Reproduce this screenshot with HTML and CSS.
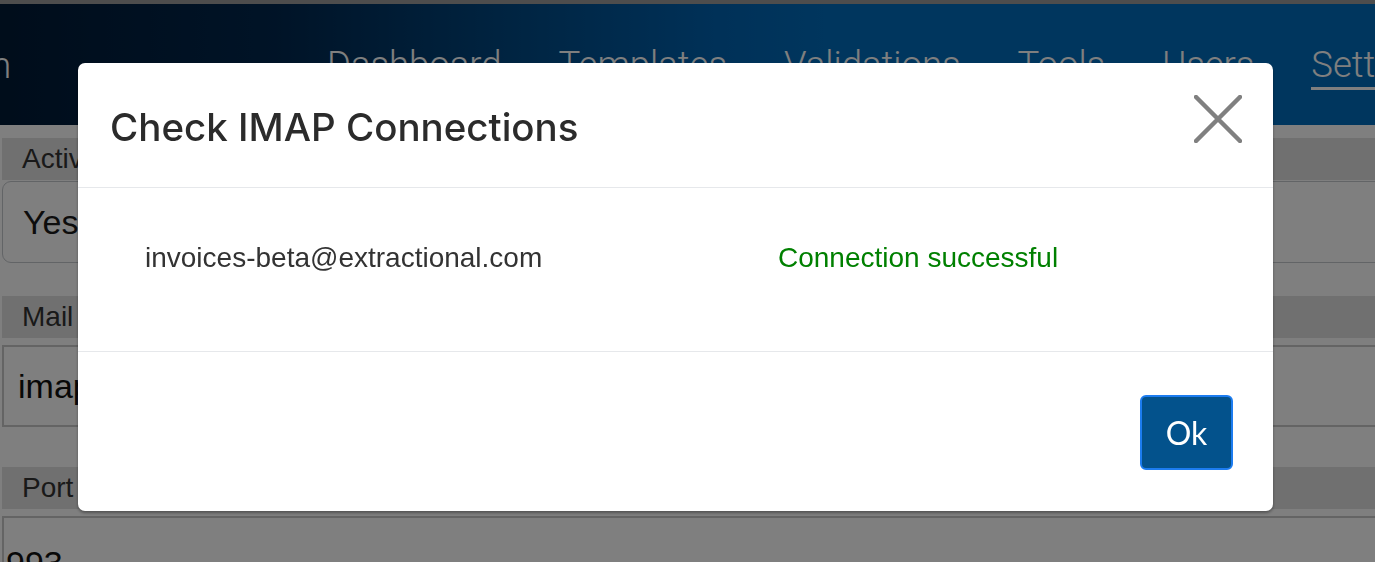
FILE: index.html
```html
<!DOCTYPE html>
<html lang="en">
<head>
<meta charset="utf-8">
<title>Settings – Check IMAP Connections</title>
<link rel="stylesheet" href="styles.css">
</head>
<body>
  <div class="topstrip"></div>
  <header class="navbar">
    <div class="brand"><span>Extractional.com</span></div>
    <nav class="nav">
      <a class="nav-link">Dashboard</a>
      <a class="nav-link">Templates</a>
      <a class="nav-link">Validations</a>
      <a class="nav-link">Tools</a>
      <a class="nav-link">Users</a>
      <a class="nav-link active">Settings</a>
    </nav>
  </header>

  <main class="form">
    <div class="field">
      <div class="label">Active</div>
      <div class="select">Yes</div>
    </div>
    <div class="field gap-mail">
      <div class="label">Mail server</div>
      <div class="input">imap.extractional.com</div>
    </div>
    <div class="field gap-port">
      <div class="label">Port</div>
      <div class="input port">993</div>
    </div>
  </main>

  <div class="backdrop"></div>

  <div class="modal" role="dialog">
    <div class="modal-header">
      <h5 class="modal-title">Check IMAP Connections</h5>
      <button class="close" aria-label="Close">
        <svg width="48" height="48" viewBox="0 0 48 48"><path d="M2 2 L46 46 M46 2 L2 46" stroke="#808080" stroke-width="4.5" stroke-linecap="round" fill="none"/></svg>
      </button>
    </div>
    <div class="modal-body">
      <div class="result-row">
        <span class="account">invoices-beta@extractional.com</span>
        <span class="status ok">Connection successful</span>
      </div>
    </div>
    <div class="modal-footer">
      <button class="btn-ok">Ok</button>
    </div>
  </div>
</body>
</html>
```

FILE: styles.css
```css
* { box-sizing: border-box; }

html, body {
  margin: 0;
  padding: 0;
  height: 100%;
  overflow: hidden;
  background: #ffffff;
  font-family: "Liberation Sans", Arial, sans-serif;
}

.topstrip {
  height: 4px;
  background: #9a9a9a;
}

.navbar {
  height: 121px;
  display: flex;
  align-items: flex-start;
  background: linear-gradient(90deg, #001a36 0%, #00274e 20%, #004a86 38%, #0062b0 52%, #006cbc 60%, #006cbc 100%);
  font-family: Roboto, "Liberation Sans", sans-serif;
  font-weight: 300;
  font-size: 36.5px;
  color: #ffffff;
  white-space: nowrap;
  overflow: hidden;
}

.brand {
  flex: 0 0 11px;
  width: 11px;
  overflow: hidden;
  direction: rtl;
  padding-top: 42px;
  line-height: 40px;
}

.brand span { direction: ltr; unicode-bidi: isolate; }

.nav {
  flex: 0 0 auto;
  display: flex;
  gap: 57px;
  margin-left: 316px;
  padding-top: 41px;
}

.nav-link {
  line-height: 40px;
  color: #ffffff;
  padding-bottom: 2px;
}

.nav-link.active {
  border-bottom: 3px solid #ffffff;
}

.form {
  padding: 13px 0 0 2px;
  margin-right: -40px;
  color: #333333;
}

.label {
  height: 42px;
  line-height: 42px;
  background: #e0e0e0;
  padding-left: 20px;
  font-size: 28px;
}

.select {
  margin-top: 1px;
  height: 82px;
  border: 1px solid #c4c8cc;
  border-radius: 9px;
  padding-left: 20px;
  font-size: 34px;
  line-height: 80px;
  color: #1a1a1a;
}

.input {
  margin-top: 7px;
  height: 82px;
  border: 2px solid #c8c8c8;
  padding-left: 14px;
  font-size: 34px;
  line-height: 78px;
  color: #111111;
}

.input.port {
  padding-left: 2px;
  line-height: 90px;
}

.gap-mail { margin-top: 33px; }
.gap-port { margin-top: 40px; }

.backdrop {
  position: fixed;
  inset: 0;
  background: rgba(0, 0, 0, 0.5);
}

.modal {
  position: fixed;
  left: 78px;
  top: 63px;
  width: 1195px;
  height: 448px;
  background: #ffffff;
  border-radius: 7px;
  box-shadow: 0 2px 3px rgba(0, 0, 0, 0.35);
  display: flex;
  flex-direction: column;
}

.modal-header {
  height: 125px;
  border-bottom: 1px solid #e6e8eb;
  display: flex;
  align-items: center;
  justify-content: space-between;
  padding: 0 31px 0 32px;
}

.modal-title {
  margin: 0;
  font-family: Inter, "Liberation Sans", sans-serif;
  font-weight: 500;
  font-size: 38.5px;
  color: #2b2b2b;
  padding-top: 4px;
}

.close {
  border: 0;
  background: none;
  padding: 0;
  width: 48px;
  height: 48px;
  margin-top: -12px;
  cursor: pointer;
}

.close svg { display: block; }

.modal-body {
  height: 164px;
  border-bottom: 1px solid #e6e8eb;
  padding: 54px 0 0 67px;
}

.result-row {
  display: grid;
  grid-template-columns: 633px auto;
  font-size: 28px;
  line-height: 32px;
}

.account { color: #333333; }
.status.ok { color: #008000; }

.modal-footer {
  flex: 1;
  display: flex;
  justify-content: flex-end;
  align-items: flex-start;
  padding: 43px 40px 0 0;
}

.btn-ok {
  width: 93px;
  height: 75px;
  background: #03528c;
  border: 2px solid #1c7cf0;
  border-radius: 6px;
  color: #ffffff;
  font-family: Lato, "Open Sans", sans-serif;
  font-size: 32px;
  padding: 0;
  cursor: pointer;
}
```
